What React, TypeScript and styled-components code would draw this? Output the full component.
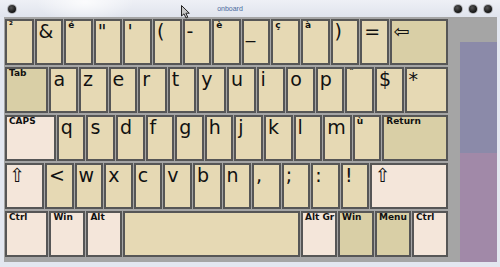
import styled, { createGlobalStyle } from "styled-components";

const GlobalStyle = createGlobalStyle`
  html, body {
    margin: 0;
    padding: 0;
    background: #e3e7f0;
  }
`;

const UNIT = 29.6;

type Tone = "base" | "dark" | "light";
type Size = "big" | "small";

interface KeyDef {
  label: string;
  size: Size;
  units?: number;
  tone?: Tone;
}

const big = (label: string, units = 1, tone: Tone = "base"): KeyDef => ({
  label,
  size: "big",
  units,
  tone,
});
const small = (label: string, units = 1, tone: Tone = "base"): KeyDef => ({
  label,
  size: "small",
  units,
  tone,
});

const rows: KeyDef[][] = [
  [
    small("²"),
    big("&"),
    small("é"),
    big('"'),
    big("'"),
    big("("),
    big("-"),
    small("è"),
    big("_"),
    small("ç"),
    small("à"),
    big(")"),
    big("="),
    big("⇦", 2, "dark"),
  ],
  [
    small("Tab", 1.5, "dark"),
    ...["a", "z", "e", "r", "t", "y", "u", "i", "o", "p"].map((c) => big(c)),
    small("ˆ"),
    big("$"),
    big("*", 1.5),
  ],
  [
    small("CAPS", 1.75, "light"),
    ...["q", "s", "d", "f", "g", "h", "j", "k", "l", "m"].map((c) => big(c)),
    small("ù"),
    small("Return", 2.25, "dark"),
  ],
  [
    big("⇧", 1.35, "light"),
    ...["<", "w", "x", "c", "v", "b", "n", ",", ";", ":", "!"].map((c) => big(c)),
    big("⇧", 2.65, "light"),
  ],
  [
    small("Ctrl", 1.5, "light"),
    small("Win", 1.25, "light"),
    small("Alt", 1.25, "light"),
    small("", 6),
    small("Alt Gr", 1.25, "light"),
    small("Win", 1.25, "dark"),
    small("Menu", 1.25, "dark"),
    small("Ctrl", 1.25, "light"),
  ],
];

const toneColors: Record<Tone, string> = {
  base: "#e6d9b4",
  dark: "#d9cfa6",
  light: "#f4e6da",
};

const Frame = styled.div`
  width: 500px;
  height: 267px;
  display: flex;
  flex-direction: column;
  background: #e3e7f0;
  overflow: hidden;
`;

const TitleBar = styled.div`
  position: relative;
  height: 17px;
  display: flex;
  align-items: center;
  padding: 0 8px;
  box-sizing: border-box;
  background:
    radial-gradient(ellipse 70px 30px at 85px 2px, rgba(255, 255, 255, 0.8), rgba(255, 255, 255, 0) 70%),
    linear-gradient(#eef0f6, #e0e4ed);
`;

const Dot = styled.span`
  width: 8px;
  height: 8px;
  border-radius: 50%;
  background: radial-gradient(circle at 40% 35%, #555 0%, #1c1c1c 60%, #000 100%);
  box-shadow: 0 0 0 1px rgba(80, 80, 80, 0.35);
`;

const Title = styled.span`
  flex: 1;
  text-align: center;
  padding-right: 10px;
  font-family: "Liberation Sans", Arial, sans-serif;
  font-size: 7px;
  color: #4a6a9e;
`;

const DotGroup = styled.div`
  display: flex;
  gap: 7px;
  margin-right: 0;
`;

const Cursor = styled.svg`
  position: absolute;
  left: 181px;
  top: 5px;
`;

const Body = styled.div`
  flex: 1;
  display: flex;
  margin: 0 3px 5px 4px;
  background: #a5a5a5;
`;

const Keyboard = styled.div`
  display: flex;
  flex-direction: column;
  gap: 2px;
  padding: 2px 0 0 1px;
`;

const Row = styled.div`
  display: flex;
  height: 46px;
`;

const Key = styled.div<{ $units: number; $tone: Tone; $size: Size }>`
  box-sizing: border-box;
  width: ${(p) => p.$units * UNIT - 1}px;
  margin-right: 1px;
  height: 100%;
  border: 2px solid #565656;
  background: ${(p) => toneColors[p.$tone]};
  color: #111;
  font-family: "DejaVu Sans", Verdana, sans-serif;
  font-size: ${(p) => (p.$size === "big" ? "19px" : "9px")};
  font-weight: ${(p) => (p.$size === "big" ? "normal" : "bold")};
  line-height: 1;
  padding: ${(p) => (p.$size === "big" ? "1px 2px 0" : "0 2px")};
  white-space: nowrap;
  overflow: hidden;
`;

const Side = styled.div`
  margin-left: auto;
  width: 37px;
  display: flex;
  flex-direction: column;
  padding-top: 25px;
`;

const SideBlock = styled.div<{ $color: string; $grow?: boolean }>`
  background: ${(p) => p.$color};
  height: ${(p) => (p.$grow ? "auto" : "111px")};
  flex: ${(p) => (p.$grow ? 1 : "none")};
`;

export default function App() {
  return (
    <>
      <GlobalStyle />
      <Frame>
        <TitleBar>
          <Dot />
          <Title>onboard</Title>
          <DotGroup>
            <Dot />
            <Dot />
            <Dot />
          </DotGroup>
          <Cursor width="11" height="14" viewBox="0 0 11 14">
            <path
              d="M0.5 0.5 L0.5 11 L3 8.8 L5 13 L6.8 12.2 L4.9 8.2 L8.3 8.2 Z"
              fill="#c8c8c8"
              stroke="#222"
              strokeWidth="1"
              strokeLinejoin="round"
            />
          </Cursor>
        </TitleBar>
        <Body>
          <Keyboard>
            {rows.map((row, ri) => (
              <Row key={ri}>
                {row.map((k, ki) => (
                  <Key
                    key={ki}
                    $units={k.units ?? 1}
                    $tone={k.tone ?? "base"}
                    $size={k.size}
                  >
                    {k.label}
                  </Key>
                ))}
              </Row>
            ))}
          </Keyboard>
          <Side>
            <SideBlock $color="#8b8aa9" />
            <SideBlock $color="#a189a8" $grow />
          </Side>
        </Body>
      </Frame>
    </>
  );
}
